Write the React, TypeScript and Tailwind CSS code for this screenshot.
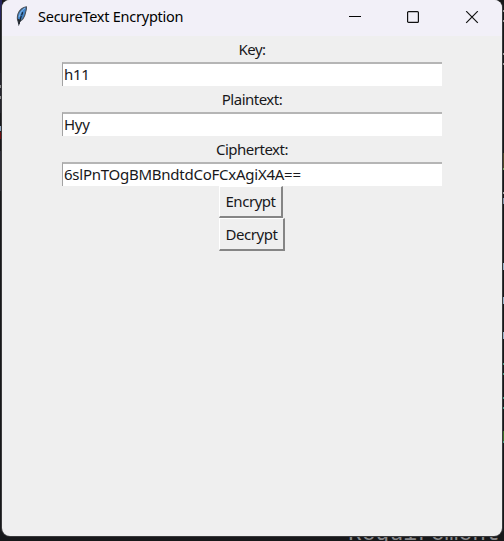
import React from "react";

const rows = [
  { label: "Key:", value: "h11" },
  { label: "Plaintext:", value: "Hyy" },
  { label: "Ciphertext:", value: "6slPnTOgBMBndtdCoFCxAgiX4A==" },
];

const leftMarks = [
  { top: 0, height: 20, cls: "bg-[#25255c]" },
  { top: 73, height: 40, cls: "bg-[#24242b]" },
  { top: 85, height: 3, cls: "bg-[#8b8b8b]" },
  { top: 96, height: 3, cls: "bg-[#8b8b8b]" },
  { top: 126, height: 5, cls: "bg-[#8fa5bd]" },
  { top: 132, height: 7, cls: "bg-[#6a0b0e]" },
  { top: 151, height: 40, cls: "bg-[#2d2d35]" },
];

const rightMarks = [
  { top: 10, height: 2, cls: "bg-[#9a9a9a]" },
  { top: 20, height: 2, cls: "bg-[#9a9a9a]" },
  { top: 53, height: 2, cls: "bg-[#9a9a9a]" },
  { top: 63, height: 2, cls: "bg-[#9a9a9a]" },
  { top: 153, height: 15, cls: "bg-[#4b4427]" },
  { top: 168, height: 2, cls: "bg-[#7ba363]" },
  { top: 192, height: 2, cls: "bg-[#a5a5a5]" },
  { top: 198, height: 6, cls: "bg-[#8796ad]" },
  { top: 263, height: 7, cls: "bg-[#9cb6cd]" },
  { top: 297, height: 7, cls: "bg-[#9cb6cd]" },
  { top: 332, height: 7, cls: "bg-[#9cb6cd]" },
  { top: 363, height: 2, cls: "bg-[#4a9c87]" },
  { top: 373, height: 2, cls: "bg-[#4a9c87]" },
  { top: 397, height: 2, cls: "bg-[#4a9c87]" },
  { top: 407, height: 2, cls: "bg-[#4a9c87]" },
  { top: 431, height: 10, cls: "bg-[#376b25]" },
  { top: 441, height: 2, cls: "bg-[#4a9c87]" },
];

function Feather() {
  return (
    <svg width="14" height="20" viewBox="0 0 14 20" className="block">
      <path d="M11.4.8C8 1 4.3 4 2.9 8.2c-.8 3-.8 5.2.2 7.2l.7 3 .8-2.8c2.8-1.7 4.9-4.6 5.7-8 .4-2.4 1.6-4.7 1.1-6.8Z" fill="#4385c9" stroke="#4b5058" strokeWidth="1.1" />
      <path d="M10 2.2C6.8 4 4.6 7.2 4.2 11" fill="none" stroke="#86b6e4" strokeWidth="1" />
      <path d="M7.6 6.2 6.6 9.4M6.3 10 3.9 17.8" fill="none" stroke="#13202f" strokeWidth="1.2" />
      <path d="M2.5 12.5 4 18.8 5.8 14.3" fill="#25282d" />
    </svg>
  );
}

export default function App() {
  return (
    <div className="relative h-[541px] w-[504px] overflow-hidden bg-[#17181a] px-[2px] font-['Noto_Sans','Open_Sans',sans-serif] text-[#18181b]">
      {leftMarks.map((m) => (
        <div key={m.top} className={`absolute left-0 w-[2px] ${m.cls}`} style={{ top: m.top, height: m.height }} />
      ))}
      {rightMarks.map((m) => (
        <div key={m.top} className={`absolute right-0 w-[2px] ${m.cls}`} style={{ top: m.top, height: m.height }} />
      ))}
      <div className="absolute left-[348px] top-[524px] whitespace-pre font-['Liberation_Mono',monospace] text-[23px] leading-5 text-[#88888a]">Requirement</div>

      <div className="relative flex h-[536px] w-[500px] flex-col overflow-hidden rounded-[8px] bg-[#efefef] shadow-[0_0_0_1px_#39393b]">
        <header className="flex h-9 shrink-0 items-center bg-[#f2f0f8]">
          <div className="ml-[13px] mt-[-4px] w-[23px]"><Feather /></div>
          <h1 className="mt-[-5px] whitespace-nowrap text-[14.5px] leading-5 tracking-[-0.25px] text-black">SecureText Encryption</h1>
          <div className="ml-auto mr-[23px] flex items-center gap-[46px]">
            <svg width="12" height="14" viewBox="0 0 12 14"><path d="M0 5.5h12" stroke="#050505" /></svg>
            <svg width="12" height="14" viewBox="0 0 12 14" fill="none"><rect x=".6" y=".6" width="10.8" height="10.8" rx="1" stroke="#111" strokeWidth="1.2" /></svg>
            <svg width="14" height="14" viewBox="0 0 14 14"><path d="m1.2.2 11.6 11.6M12.8.2 1.2 11.8" stroke="#111" strokeWidth="1.2" /></svg>
          </div>
        </header>
        <main className="flex flex-col items-center text-[15px]">
          {rows.map((r) => (
            <React.Fragment key={r.label}>
              <label className="flex h-[26px] items-center leading-5 tracking-[-0.5px]">{r.label}</label>
              <div className="flex h-6 w-[380px] items-center whitespace-nowrap border-l border-t-2 border-l-[#a3a3a3] border-t-[#b5b5b5] bg-white pb-[2px] pl-px leading-5">
                <span className="tracking-[-0.25px]">{r.value}</span>
              </div>
            </React.Fragment>
          ))}
          <button className="mr-[2px] flex h-8 w-16 items-center justify-center border-b-2 border-l border-r-2 border-t border-b-[#858585] border-l-white border-r-[#858585] border-t-white pb-px leading-5 tracking-[-0.45px]">Encrypt</button>
          <button className="flex h-[33px] w-[66px] items-center justify-center border-b-2 border-l border-r-2 border-t border-b-[#858585] border-l-white border-r-[#858585] border-t-white pb-px leading-5 tracking-[-0.45px]">Decrypt</button>
        </main>
      </div>
    </div>
  );
}
